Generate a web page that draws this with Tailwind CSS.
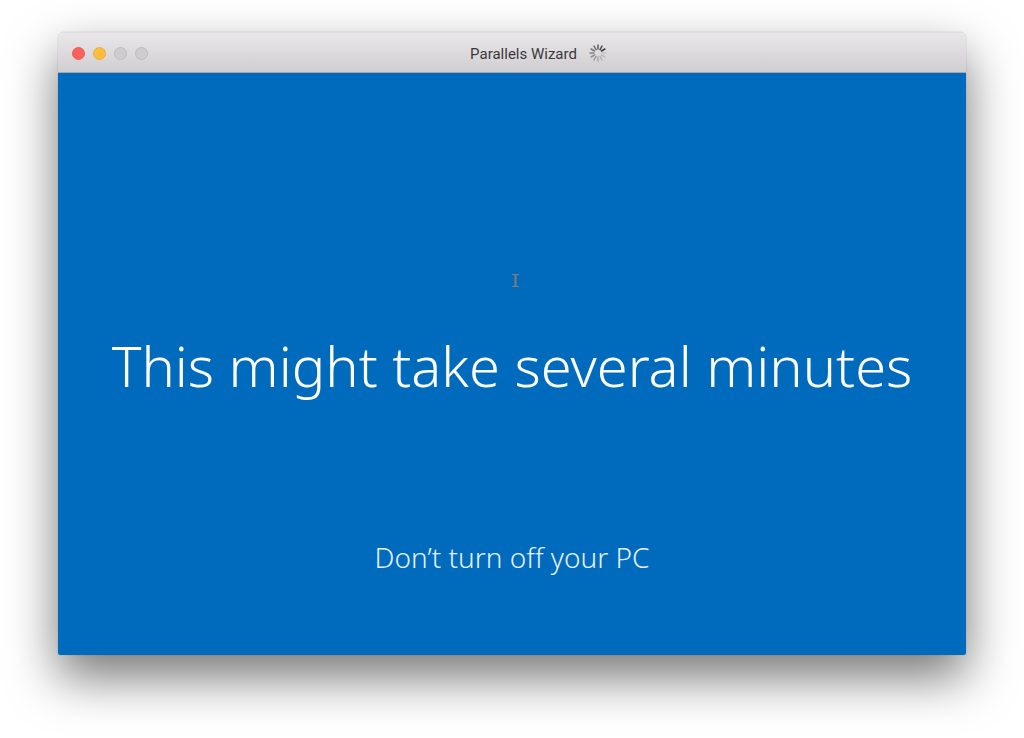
<!DOCTYPE html>
<html lang="en">
<head>
  <meta charset="UTF-8" />
  <meta name="viewport" content="width=device-width, initial-scale=1.0"/>
  <title>Parallels Wizard</title>
  <script src="https://cdn.jsdelivr.net/npm/@tailwindcss/browser@4"></script>
</head>
<body class="bg-white min-h-screen flex flex-col px-[58px] pt-8 pb-[83px] overflow-hidden">
  <!-- Window -->
  <div class="flex-1 flex flex-col rounded-t-md rounded-b-xs overflow-hidden shadow-[0_0_1px_rgba(0,0,0,0.4),0_22px_50px_rgba(0,0,0,0.54)]">
    <!-- Title bar -->
    <header class="h-[41px] shrink-0 grid grid-cols-[1fr_auto_1fr] items-center px-[14px] pt-px bg-linear-to-b from-[#e9e7e9] to-[#d1ced1] border-t border-b border-t-[#dedede] border-b-[#a9a7a9]">
      <div class="flex gap-2">
        <button aria-label="Close" class="size-[13px] rounded-full bg-[#fc605c] border border-[#ee5a57]"></button>
        <button aria-label="Minimize" class="size-[13px] rounded-full bg-[#fdbc40] border border-[#ecae3a]"></button>
        <button aria-label="Zoom" disabled class="size-[13px] rounded-full bg-[#cecccd] border border-[#bdbbbc]"></button>
        <button aria-label="Full screen" disabled class="size-[13px] rounded-full bg-[#cecccd] border border-[#bdbbbc]"></button>
      </div>
      <div class="flex items-center gap-3 pl-[53px]">
        <h1 class="font-[Roboto,sans-serif] text-[15px] leading-5 pt-px text-[#3a393a]">Parallels Wizard</h1>
        <!-- Spinner -->
        <svg class="size-[18px]" viewBox="0 0 18 18" stroke="#3c3b3c" stroke-width="1.5" stroke-linecap="round">
          <path d="M9 1v4" opacity=".8"/>
          <path d="M9 1v4" opacity=".9" transform="rotate(30 9 9)"/>
          <path d="M9 1v4" transform="rotate(60 9 9)"/>
          <path d="M9 1v4" opacity=".15" transform="rotate(90 9 9)"/>
          <path d="M9 1v4" opacity=".18" transform="rotate(120 9 9)"/>
          <path d="M9 1v4" opacity=".22" transform="rotate(150 9 9)"/>
          <path d="M9 1v4" opacity=".3" transform="rotate(180 9 9)"/>
          <path d="M9 1v4" opacity=".38" transform="rotate(210 9 9)"/>
          <path d="M9 1v4" opacity=".46" transform="rotate(240 9 9)"/>
          <path d="M9 1v4" opacity=".54" transform="rotate(270 9 9)"/>
          <path d="M9 1v4" opacity=".62" transform="rotate(300 9 9)"/>
          <path d="M9 1v4" opacity=".7" transform="rotate(330 9 9)"/>
        </svg>
      </div>
    </header>

    <!-- Setup screen -->
    <main class="relative flex-1 flex flex-col items-center justify-end bg-[#006bbd] font-['Noto_Sans',sans-serif] font-light text-white text-center whitespace-nowrap pb-20">
      <p class="text-[56px] leading-[72px] mb-[138px]">This might take several minutes</p>
      <p class="text-[28px] leading-9 text-[#e6f0f8]">Don’t turn off your PC</p>

      <!-- Text cursor -->
      <svg class="absolute left-1/2 top-[201px] w-[7px] h-[13px]" viewBox="0 0 7 13" fill="none" stroke="#857b78">
        <path d="M0 .5h7M0 12.5h7"/>
        <path d="M3.5 1v11" stroke-width="2"/>
      </svg>
    </main>
  </div>
</body>
</html>
